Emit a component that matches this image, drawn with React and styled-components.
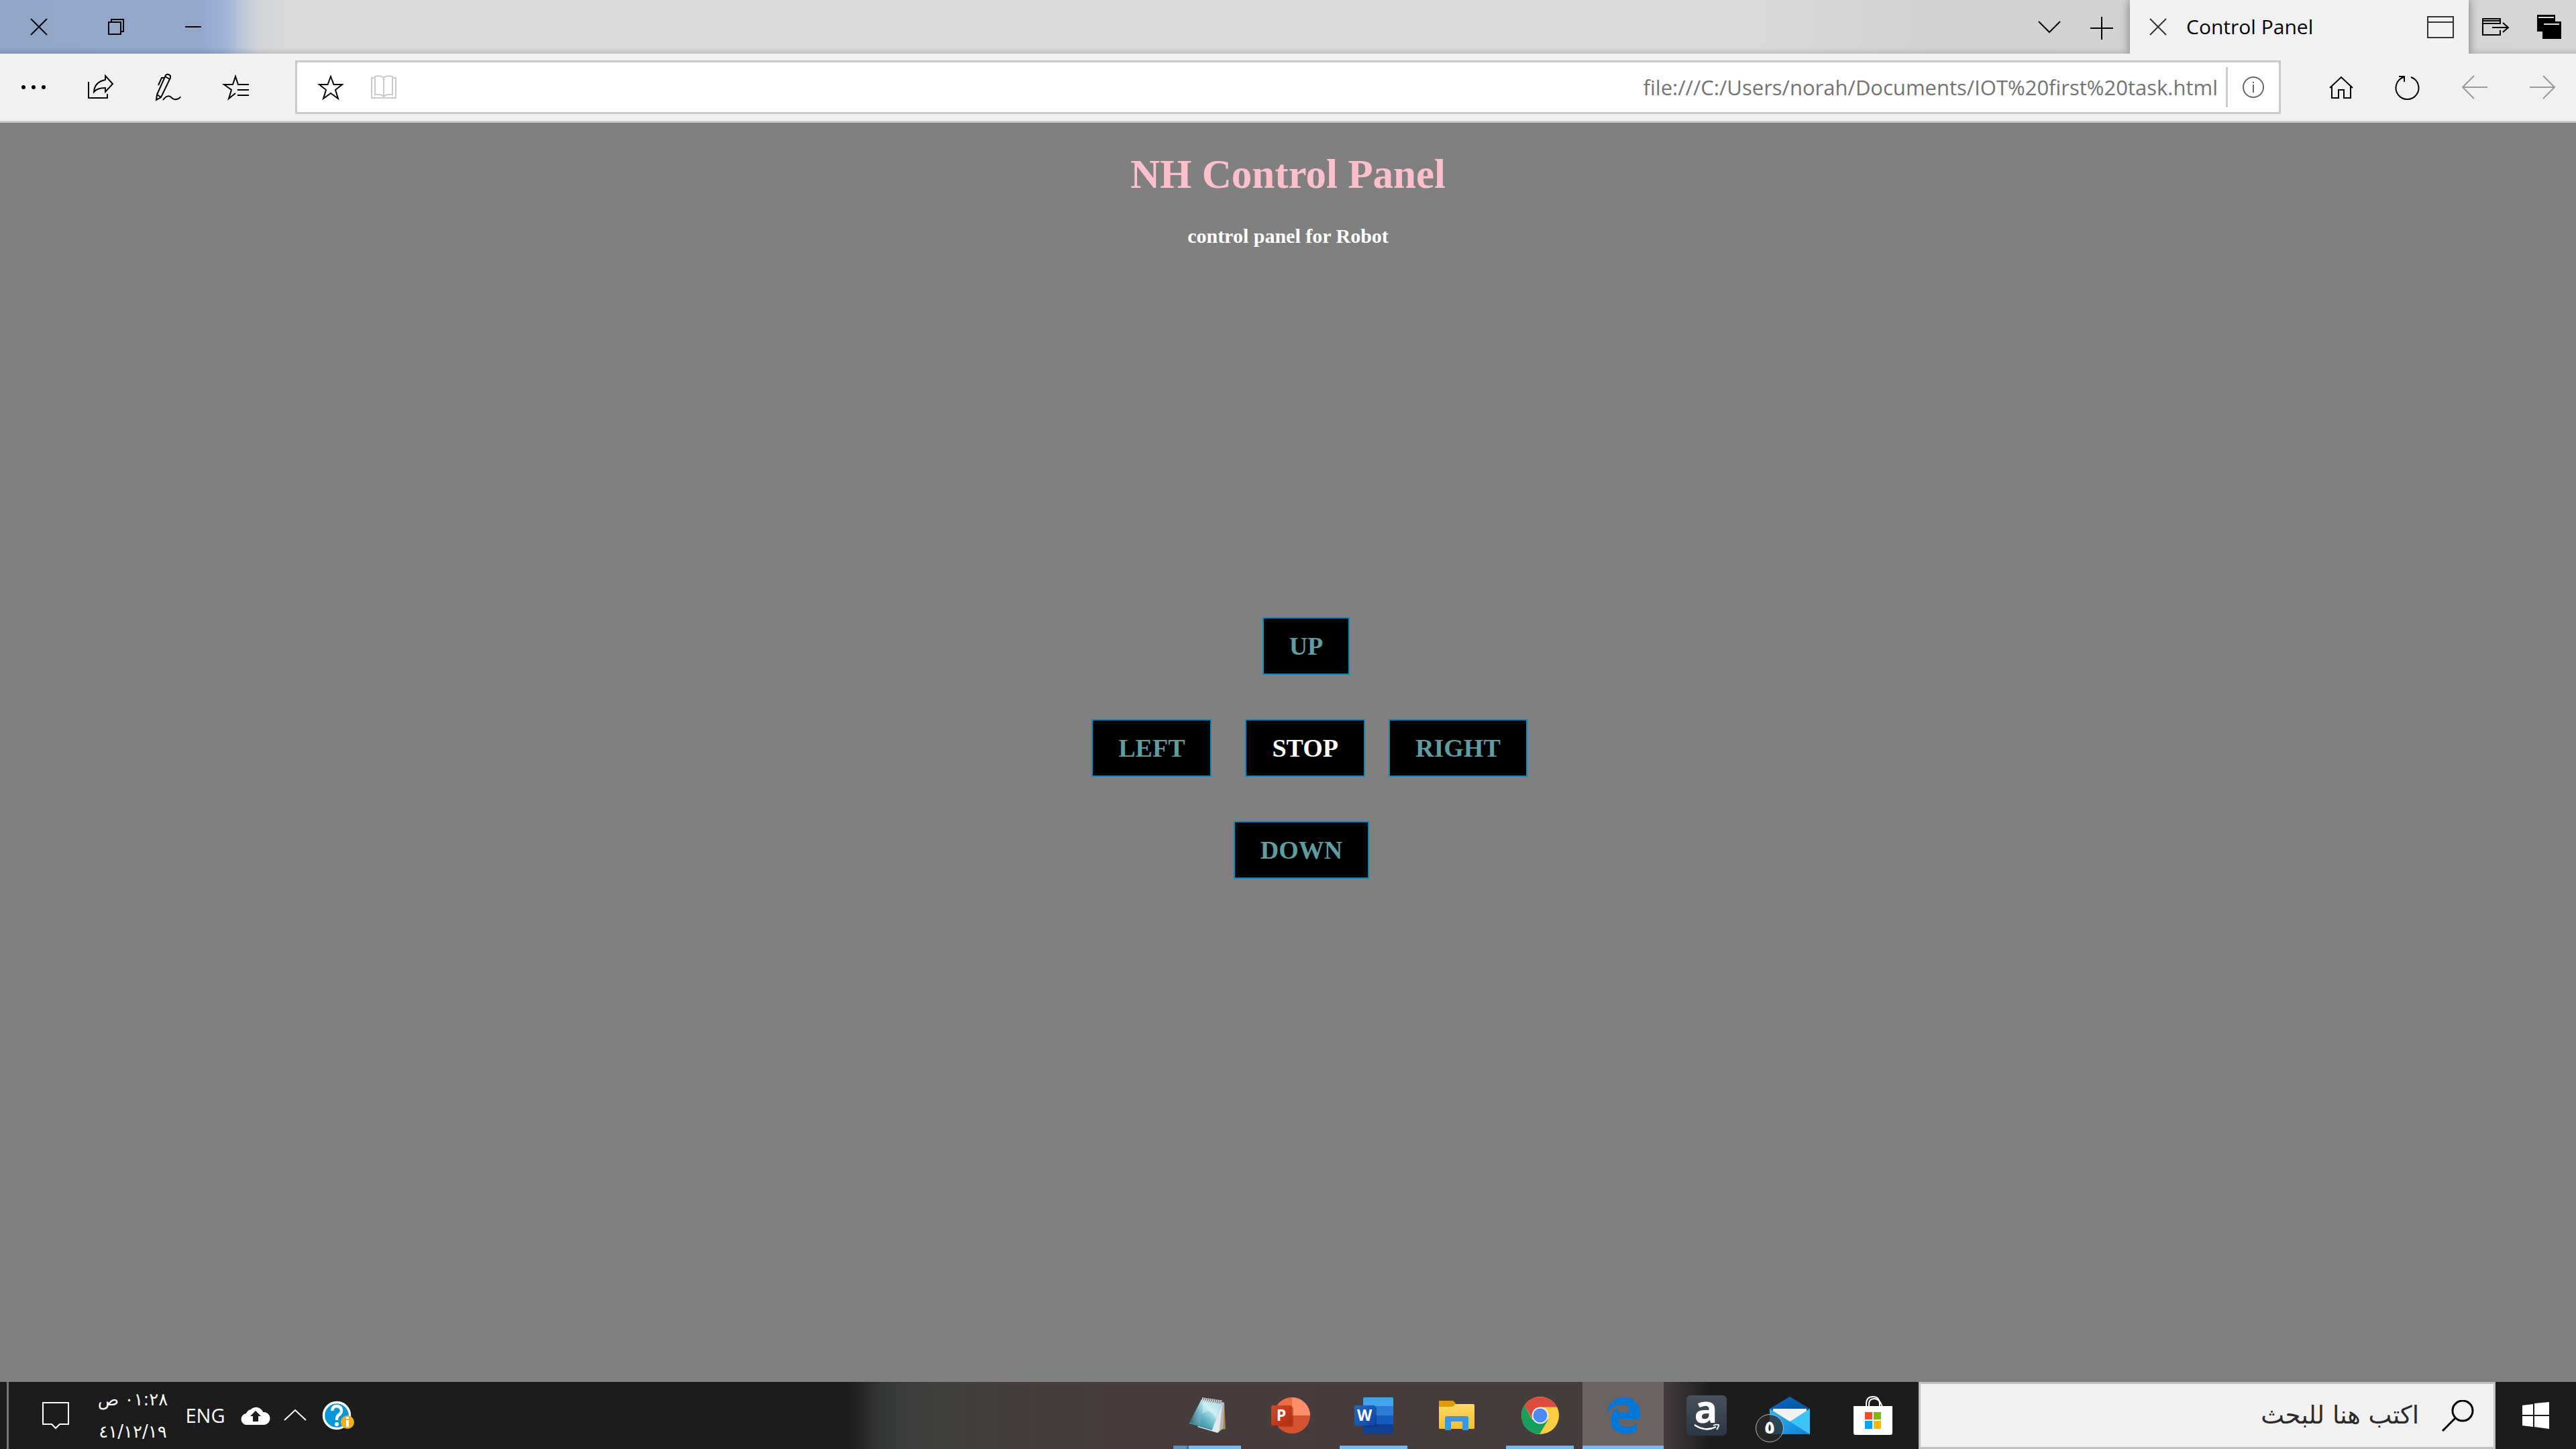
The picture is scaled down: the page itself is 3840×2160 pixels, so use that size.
import React from "react";
import styled, { createGlobalStyle } from "styled-components";

const uiFont = `"Open Sans", "Noto Sans", "DejaVu Sans", sans-serif`;

const GlobalStyle = createGlobalStyle`
  *, *::before, *::after { box-sizing: border-box; }
  body { margin: 0; }
  button, input { font: inherit; color: inherit; margin: 0; border: 0; background: none; }
`;

const Screen = styled.div`
  min-height: 100vh;
  display: flex;
  flex-direction: column;
  background: #808080;
  font-family: ${uiFont};
  color: #000;
`;

const IconButton = styled.button`
  width: ${(p) => p.$w}px;
  flex: none;
  align-self: stretch;
  display: flex;
  align-items: center;
  justify-content: center;
  padding: 0;
  svg { display: block; overflow: visible; }
`;

const TitleBar = styled.header`
  height: 80px;
  display: flex;
  align-items: stretch;
  background:
    linear-gradient(180deg, transparent 88%, rgba(0, 0, 0, 0.1) 100%),
    linear-gradient(90deg, #92a6c8 0, #94a8cb 300px, #9fb3d6 335px, #bac6d9 360px, #d3d5d7 385px, #dadada 430px, #dadada 2600px, #d2d2d2 2900px, #d6d6d6 100%);
`;

const WindowControls = styled.div`
  display: flex;
  flex: 1;
`;

const Tab = styled.div`
  width: 505px;
  display: flex;
  align-items: center;
  background: #f1f1f1;
  box-shadow: 0 0 14px rgba(0, 0, 0, 0.45);
  clip-path: inset(0 -16px 0 -16px);
`;

const TabTitle = styled.span`
  flex: 1;
  font-size: 30px;
  line-height: 44px;
  white-space: nowrap;
`;

const Toolbar = styled.nav`
  height: 103px;
  display: flex;
  align-items: stretch;
  background: #f1f1f1;
  border-bottom: 3px solid #cbcbcb;
`;

const AddressBar = styled.div`
  flex: 1;
  margin: 10px 40px 10px 38px;
  display: flex;
  align-items: center;
  background: #fff;
  border: 3px solid #cbcbcb;
`;

const AddressInput = styled.input`
  flex: 1;
  min-width: 0;
  padding: 0 12px 0 0;
  outline: 0;
  text-align: right;
  font-size: 31px;
  line-height: 44px;
  color: #747474;
`;

const AddressDivider = styled.span`
  width: 3px;
  height: 60px;
  background: #cbcbcb;
`;

const Page = styled.main`
  flex: 1;
  display: flex;
  flex-direction: column;
  align-items: center;
  padding-top: 42px;
  font-family: "Liberation Serif", "Times New Roman", serif;
  font-weight: bold;
`;

const Heading = styled.h1`
  margin: 0;
  font-size: 61px;
  line-height: 70px;
  color: pink;
`;

const SubHeading = styled.h2`
  margin: 40px 0 0;
  font-size: 30px;
  line-height: 34px;
  color: #fff;
`;

const Controls = styled.div`
  margin-top: 551px;
  display: flex;
  flex-direction: column;
  align-items: center;
  gap: 66px;
`;

const ControlRow = styled.div`
  display: flex;
  gap: ${(p) => p.$gap || 0}px;
  padding-left: ${(p) => p.$indent}px;
`;

const ControlButton = styled.button`
  padding: 19px 38px;
  border: 2px solid #008cba;
  background: #000;
  color: ${(p) => (p.$stop ? "#fff" : "cadetblue")};
  font-size: 38px;
  font-weight: bold;
  line-height: 44px;
`;

const CenterPair = styled.div`
  display: flex;
  gap: 35px;
`;

const Taskbar = styled.footer`
  height: 100px;
  display: flex;
  align-items: stretch;
  color: #fff;
  background: linear-gradient(90deg, #1c1c1c 0, #1c1c1c 1265px, #333435 1310px, #3b3c3c 1350px, #40403e 1400px, #443d3c 1560px, #473c3d 1680px, #453c3e 2480px, #1c1c1c 2550px, #1c1c1c 100%);
`;

const Tray = styled.div`
  flex: 1;
  display: flex;
  align-items: stretch;
  padding-left: 10px;
`;

const ShowDesktop = styled.button`
  width: 3px;
  padding: 0;
  background: #767676;
`;

const Clock = styled.time`
  width: 90px;
  margin-right: 17px;
  display: flex;
  flex-direction: column;
  align-items: center;
  justify-content: center;
  font-family: "DejaVu Sans", sans-serif;
  font-size: 26px;
  line-height: 48px;
  white-space: nowrap;
`;

const Language = styled.button`
  width: 92px;
  padding: 0;
  font-size: 29px;
  line-height: 40px;
`;

const Apps = styled.div`
  display: flex;
  gap: 3px;
  padding-right: 8px;
`;

const AppButton = styled.button`
  width: 121px;
  padding: 0;
  display: flex;
  align-items: center;
  justify-content: center;
  position: relative;
  background: ${(p) => (p.$active ? "#696364" : "none")};
  svg { display: block; overflow: visible; }
  &::after {
    content: "";
    display: ${(p) => (p.$running ? "block" : "none")};
    position: absolute;
    bottom: 0;
    left: ${(p) => (p.$active ? 0 : 10)}px;
    right: ${(p) => (p.$active ? 0 : 10)}px;
    height: 5px;
    background: ${(p) =>
      p.$stacked
        ? "linear-gradient(90deg, #5f93bd 20px, #4a6f8d 20px, #4a6f8d 23px, #76b9ed 23px)"
        : "#76b9ed"};
  }
`;

const Badge = styled.span`
  position: absolute;
  left: 10px;
  top: 48px;
  width: 42px;
  height: 42px;
  border: 1px solid #b5b5b5;
  border-radius: 50%;
  background: rgba(42, 42, 42, 0.75);
  font: bold 27px/38px "DejaVu Sans", sans-serif;
  text-align: center;
`;

const Search = styled.label`
  width: 860px;
  display: flex;
  align-items: center;
  gap: 34px;
  padding-right: 29px;
  background: #f1f1f1;
  border: 3px solid #c0c0c0;
`;

const SearchInput = styled.input`
  flex: 1;
  min-width: 0;
  padding: 0;
  outline: 0;
  font-family: "DejaVu Sans", sans-serif;
  font-size: 37px;
  line-height: 50px;
  color: #2b2b2b;
  &::placeholder { color: #2b2b2b; opacity: 1; }
`;

const Svg = ({ w, h, sw = 2, color = "#000", children }) => (
  <svg width={w} height={h} viewBox={`0 0 ${w} ${h}`} fill="none" stroke={color} strokeWidth={sw} aria-hidden="true">
    {children}
  </svg>
);

const CloseIcon = ({ color }) => (
  <Svg w={24} h={24} color={color}><path d="M0 0 24 24M24 0 0 24" /></Svg>
);

const NotepadIcon = () => (
  <svg width="56" height="54" viewBox="0 0 56 54" aria-hidden="true">
    <defs>
      <linearGradient id="note" x1="0" y1="1" x2="1" y2="0">
        <stop offset="0" stopColor="#2b6672" /><stop offset=".4" stopColor="#5fb2c4" /><stop offset=".65" stopColor="#b9e5ee" /><stop offset="1" stopColor="#6fc0d0" />
      </linearGradient>
      <linearGradient id="noteShade" x1="0" y1="0" x2="1" y2="0">
        <stop offset="0" stopColor="#1f4d59" stopOpacity=".8" /><stop offset="1" stopColor="#bfe3ea" stopOpacity=".1" />
      </linearGradient>
    </defs>
    <path d="M48 8 53 7 55 47 50 48Z" fill="#a58a4c" />
    <path d="M49 8 52 8 51 46 43 53 13 44Z" fill="#e3e8ea" />
    <path d="M50 9 46 48 43 53 51 46 53 9Z" fill="#aeb6b9" />
    <path d="M19 3 50 9 35 48 1 38Z" fill="url(#note)" />
    <path d="M19 3 21 4 17 43 1 38Z" fill="url(#noteShade)" />
    <path d="M22 5 49 10 40 31Q32 14 20 25Z" fill="#fff" opacity=".35" />
    <path d="M1 38 35 48" stroke="#3b93a6" strokeWidth="2" />
    <path d="M20 2.500 50 7" stroke="#d8d8d8" strokeWidth="5" strokeDasharray="2 1" />
    <path d="M20 5 50 9" stroke="#686868" strokeWidth="1" strokeDasharray="1 2" />
  </svg>
);

const PowerPointIcon = () => (
  <svg width="58" height="54" viewBox="0 0 58 54" aria-hidden="true">
    <defs><linearGradient id="ppt" x1="0" y1="0" x2="1" y2="1"><stop offset="0" stopColor="#ca4c28" /><stop offset="1" stopColor="#b52b10" /></linearGradient></defs>
    <circle cx="31" cy="27" r="27" fill="#d35230" />
    <path d="M31 27V0A27 27 0 0 0 4 27Z" fill="#ed6c47" />
    <path d="M31 27V0A27 27 0 0 1 58 27Z" fill="#ff8f6b" />
    <rect x="3" y="14" width="30" height="30" rx="2" fill="#7a2614" opacity=".45" />
    <rect y="12" width="31" height="30" rx="2" fill="url(#ppt)" />
    <text x="15" y="35" textAnchor="middle" fontFamily="Open Sans, sans-serif" fontWeight="700" fontSize="23" fill="#fff">P</text>
  </svg>
);

const WordIcon = () => (
  <svg width="58" height="54" viewBox="0 0 58 54" aria-hidden="true">
    <defs><linearGradient id="word" x1="0" y1="0" x2="1" y2="1"><stop offset="0" stopColor="#2368c4" /><stop offset="1" stopColor="#0f45a8" /></linearGradient></defs>
    <rect x="13" width="45" height="54" rx="2" fill="#103f91" />
    <path d="M13 27H58V40H13Z" fill="#185abd" />
    <path d="M13 13H58V27H13Z" fill="#2b7cd3" />
    <path d="M15 0H56Q58 0 58 2V13H13V2Q13 0 15 0Z" fill="#41a5ee" />
    <rect x="13" y="14" width="20" height="30" rx="2" fill="#0b2f6d" opacity=".5" />
    <rect y="12" width="31" height="30" rx="2" fill="url(#word)" />
    <text x="15" y="35" textAnchor="middle" fontFamily="Open Sans, sans-serif" fontWeight="700" fontSize="23" fill="#fff">W</text>
  </svg>
);

const FolderIcon = () => (
  <svg width="53" height="44" viewBox="0 0 53 44" aria-hidden="true">
    <defs><linearGradient id="folder" x1="0" y1="0" x2="0" y2="1"><stop offset="0" stopColor="#ffdc74" /><stop offset="1" stopColor="#fbbf25" /></linearGradient></defs>
    <path d="M2 0H20Q22 0 24 5H51Q53 5 53 7V41Q53 42 51 42H2Q0 42 0 41V2Q0 0 2 0Z" fill="url(#folder)" />
    <path d="M2 0H20Q22 0 25 4.500L22 8Q21 9 19 9H0V2Q0 0 2 0Z" fill="#e09b00" />
    <path d="M9 44V26Q9 23 12 23H41Q44 23 44 26V44H35V31H18V44Z" fill="#3b97e0" />
  </svg>
);

const ChromeIcon = () => (
  <svg width="56" height="56" viewBox="0 0 56 56" aria-hidden="true">
    <circle cx="28" cy="28" r="28" fill="#ffcd42" />
    <path d="M28 28 40 34 27 56A28 28 0 0 1 4.500 13L16 34Z" fill="#17a05d" />
    <path d="M4.500 13A28 28 0 0 1 53 15.500H28L15.500 32Z" fill="#dd4b3e" />
    <circle cx="28" cy="28" r="12.500" fill="#f1f1f1" />
    <circle cx="28" cy="28" r="10.500" fill="#4c8bf5" />
  </svg>
);

const EdgeIcon = () => (
  <svg width="50" height="54" viewBox="0 0 50 54" aria-hidden="true">
    <path d="M0 24C2 9 12 0 26 0C42 0 50 12 50 25V32H17C18 41 24 44 31 44C37 44 42 42 45 39V50C40 53 35 54 29 54C14 54 6 45 6 34C6 25 11 19 18 14C16 16 16 19 16 22H34C34 14 31 11 25 11C13 11 4 17 0 24Z" fill="#0078d7" />
  </svg>
);

const AmazonIcon = () => (
  <svg width="60" height="60" viewBox="0 0 60 60" aria-hidden="true">
    <defs><linearGradient id="amazon" x1="0" y1="0" x2="0" y2="1"><stop offset="0" stopColor="#47505a" /><stop offset="1" stopColor="#2d3743" /></linearGradient></defs>
    <rect width="60" height="60" rx="6" fill="url(#amazon)" />
    <text x="29" y="41" textAnchor="middle" fontFamily="Open Sans, sans-serif" fontWeight="700" fontSize="58" fill="#fff">a</text>
    <path d="M12 44Q28 55 44 47" fill="none" stroke="#fff" strokeWidth="2.500" />
    <path d="M40 45Q44 43 48 44Q48 48 45 51" fill="none" stroke="#fff" strokeWidth="1.800" />
  </svg>
);

const MailIcon = () => (
  <svg width="60" height="56" viewBox="0 0 60 56" aria-hidden="true">
    <defs>
      <linearGradient id="mailBack" x1="0" y1="0" x2="1" y2="1"><stop offset="0" stopColor="#0a6cc4" /><stop offset="1" stopColor="#084a94" /></linearGradient>
      <linearGradient id="mailFront" x1="0" y1="0" x2="1" y2="1"><stop offset="0" stopColor="#2fb4f0" /><stop offset="1" stopColor="#0f80d8" /></linearGradient>
    </defs>
    <path d="M0 18 30 0 60 18V30H0Z" fill="url(#mailBack)" />
    <path d="M5 18H55V24L30 42 5 24Z" fill="#f3f3f3" />
    <path d="M60 18V56H0Z" fill="#3cc4f4" />
    <path d="M5 18H55V20L30 37 5 22Z" fill="#f3f3f3" />
    <path d="M0 18 60 56H0Z" fill="url(#mailFront)" />
  </svg>
);

const StoreIcon = () => (
  <svg width="58" height="58" viewBox="0 0 58 58" aria-hidden="true">
    <g fill="none" stroke="#fff" strokeWidth="2">
      <path d="M19 16V12Q19 1 29 1T39 12V16" /><path d="M23 16V12Q23 4 31 4T43 16" />
    </g>
    <path d="M0 15H58V55Q58 58 55 58H3Q0 58 0 55Z" fill="#fff" />
    <path d="M17 24H28V35H17Z" fill="#f25022" /><path d="M30 24H41V35H30Z" fill="#7fba00" />
    <path d="M17 37H28V49H17Z" fill="#00a4ef" /><path d="M30 37H41V49H30Z" fill="#ffb900" />
  </svg>
);

const HelpIcon = () => (
  <svg width="48" height="44" viewBox="0 0 48 44" aria-hidden="true">
    <circle cx="21" cy="22" r="19.500" fill="#0696d7" stroke="#fff" strokeWidth="3.500" />
    <path d="M14 15Q15 8 21 8Q28 9 28 15Q28 19 23 22Q21 24 21 29" fill="none" stroke="#fff" strokeWidth="4.500" />
    <circle cx="21" cy="35" r="3" fill="#fff" />
    <circle cx="37" cy="32" r="10" fill="#f5ae18" />
    <path d="M37 29V39M37 24V27" stroke="#fff" strokeWidth="4" />
  </svg>
);

const apps = [
  { name: "Notepad", icon: <NotepadIcon />, running: true, stacked: true },
  { name: "PowerPoint", icon: <PowerPointIcon /> },
  { name: "Word", icon: <WordIcon />, running: true },
  { name: "File Explorer", icon: <FolderIcon /> },
  { name: "Chrome", icon: <ChromeIcon />, running: true },
  { name: "Edge", icon: <EdgeIcon />, running: true, active: true },
  { name: "Amazon", icon: <AmazonIcon /> },
  { name: "Mail", icon: <MailIcon />, badge: "٥" },
  { name: "Store", icon: <StoreIcon /> },
];

export default function App() {
  return (
    <Screen>
      <GlobalStyle />
      <TitleBar>
        <WindowControls>
          <IconButton $w={115} aria-label="Close window"><CloseIcon /></IconButton>
          <IconButton $w={115} aria-label="Restore window">
            <Svg w={24} h={24}><path d="M1 5H19V23H1ZM5 5V1H23V19H19" /></Svg>
          </IconButton>
          <IconButton $w={115} aria-label="Minimize window"><Svg w={24} h={2}><path d="M0 1H24" /></Svg></IconButton>
        </WindowControls>
        <IconButton $w={72} aria-label="Tab list"><Svg w={32} h={17}><path d="M0 0 16 16 32 0" /></Svg></IconButton>
        <IconButton $w={84} aria-label="New tab"><Svg w={34} h={34}><path d="M17 2V36M0 19H34" /></Svg></IconButton>
        <Tab>
          <IconButton $w={84} aria-label="Close tab"><CloseIcon color="#333" /></IconButton>
          <TabTitle>Control Panel</TabTitle>
          <IconButton $w={84} aria-label="Tab preview">
            <Svg w={40} h={33} color="#333"><path d="M1 1H39V32H1ZM1 9H39" /></Svg>
          </IconButton>
        </Tab>
        <IconButton $w={80} aria-label="Set tabs aside">
          <Svg w={40} h={26}><path d="M27 9V1H1V25H27V18M1 4H27M1 8H27M15 14H39M31 7 39 14 31 21" /></Svg>
        </IconButton>
        <IconButton $w={80} aria-label="Tabs set aside">
          <Svg w={36} h={36} color="none">
            <path d="M0 0H27V25H0Z" fill="#000" /><path d="M2 3H25V5H2Z" fill="#ddd" />
            <path d="M8 10H36V36H8Z" fill="#000" /><path d="M10 13H33V15H10Z" fill="#ddd" />
          </Svg>
        </IconButton>
      </TitleBar>

      <Toolbar>
        <IconButton $w={100} aria-label="More">
          <Svg w={36} h={6} color="none"><g fill="#000"><circle cx="3" cy="3" r="3" /><circle cx="18" cy="3" r="3" /><circle cx="33" cy="3" r="3" /></g></Svg>
        </IconButton>
        <IconButton $w={100} aria-label="Share">
          <Svg w={38} h={36}><path d="M1 10V34H29V28M26 1 37 13 26 25V19Q14 19 9 25Q10 10 26 7Z" /></Svg>
        </IconButton>
        <IconButton $w={102} aria-label="Add notes">
          <Svg w={38} h={40}>
            <path d="M2 31 15 2Q18 -1 22 3V6L8 35 1 39ZM14 4 21 8M14 6 9 6 4 17M2 31 8 35M11 39Q17 31 22 34Q27 39 31 38Q36 37 37 34" />
          </Svg>
        </IconButton>
        <IconButton $w={100} aria-label="Favorites list">
          <Svg w={40} h={38}><path d="M39 15H23L19 3 15 15H2L13 23 9 36 19 28M22 23H39M22 31H39" /></Svg>
        </IconButton>
        <AddressBar>
          <IconButton $w={100} aria-label="Add to favorites">
            <Svg w={40} h={38}><path d="M20 3 24.500 15H37L27 23 31 36 20 28 9 36 13 23 3 15H15.500Z" /></Svg>
          </IconButton>
          <IconButton $w={58} aria-label="Reading view">
            <Svg w={38} h={36} color="#cbcbcb"><path d="M6 4H1V34H37V4H32M19 4Q15 0 6 2V29Q15 28 19 32Q23 28 32 29V2Q23 0 19 4V32" /></Svg>
          </IconButton>
          <AddressInput aria-label="Address" defaultValue="file:///C:/Users/norah/Documents/IOT%20first%20task.html" />
          <AddressDivider />
          <IconButton $w={76} aria-label="Site information">
            <Svg w={32} h={32} color="#666"><circle cx="16" cy="16" r="15" /><path d="M16 12V24M16 8V10" /></Svg>
          </IconButton>
        </AddressBar>
        <IconButton $w={100} aria-label="Home">
          <Svg w={36} h={34}><path d="M1 18 18 2 35 18M4 16V33H14V21H22V33H32V16" /></Svg>
        </IconButton>
        <IconButton $w={98} aria-label="Refresh">
          <Svg w={36} h={36}><path d="M23 3A17 17 0 1 1 12 3M5 2H13V10" /></Svg>
        </IconButton>
        <IconButton $w={102} aria-label="Back"><Svg w={38} h={34} color="#999"><path d="M38 17H1M18 0 1 17 18 34" /></Svg></IconButton>
        <IconButton $w={100} aria-label="Forward"><Svg w={38} h={34} color="#999"><path d="M0 17H37M20 0 37 17 20 34" /></Svg></IconButton>
      </Toolbar>

      <Page>
        <Heading>NH Control Panel</Heading>
        <SubHeading>control panel for Robot</SubHeading>
        <Controls>
          <ControlRow $indent={54}><ControlButton>UP</ControlButton></ControlRow>
          <ControlRow $indent={64} $gap={50}>
            <ControlButton>LEFT</ControlButton>
            <CenterPair>
              <ControlButton $stop>STOP</ControlButton>
              <ControlButton>RIGHT</ControlButton>
            </CenterPair>
          </ControlRow>
          <ControlRow $indent={40}><ControlButton>DOWN</ControlButton></ControlRow>
        </Controls>
      </Page>

      <Taskbar>
        <Tray>
          <ShowDesktop aria-label="Show desktop" />
          <IconButton $w={140} aria-label="Notifications">
            <Svg w={40} h={40} color="#fff"><path d="M1 1H39V33H26L20 39 14 33H1Z" /></Svg>
          </IconButton>
          <Clock dir="rtl"><span>٠١:٢٨ ص</span><span dir="ltr">٤١/١٢/١٩</span></Clock>
          <Language>ENG</Language>
          <IconButton $w={58} aria-label="Cloud upload">
            <svg width="40" height="28" viewBox="0 0 40 28" aria-hidden="true">
              <path d="M8 28A8 8 0 0 1 6 11 10 10 0 0 1 13 5 11 11 0 0 1 31 9 9 9 0 0 1 33 28Z" fill="#fff" />
              <path d="M20 7 28 15H24V23H16V15H12Z" fill="#1c1c1c" />
            </svg>
          </IconButton>
          <IconButton $w={60} aria-label="Show hidden icons"><Svg w={32} h={16} color="#fff"><path d="M0 15 16 0 32 15" /></Svg></IconButton>
          <IconButton $w={70} aria-label="Help"><HelpIcon /></IconButton>
        </Tray>
        <Apps>
          {apps.map((app) => (
            <AppButton key={app.name} aria-label={app.name} $running={app.running} $active={app.active} $stacked={app.stacked}>
              {app.icon}
              {app.badge && <Badge>{app.badge}</Badge>}
            </AppButton>
          ))}
        </Apps>
        <Search>
          <SearchInput dir="rtl" aria-label="Search" placeholder="اكتب هنا للبحث" />
          <Svg w={48} h={47} sw={3}><circle cx="31" cy="16" r="15" /><path d="M20 27 1 46" /></Svg>
        </Search>
        <IconButton $w={120} aria-label="Start">
          <svg width="40" height="40" viewBox="0 0 40 40" aria-hidden="true">
            <path d="M0 5 16 3V19H0ZM18 2 40 0V19H18ZM0 21H16V37L0 35ZM18 21H40V40L18 37Z" fill="#fff" />
          </svg>
        </IconButton>
      </Taskbar>
    </Screen>
  );
}
